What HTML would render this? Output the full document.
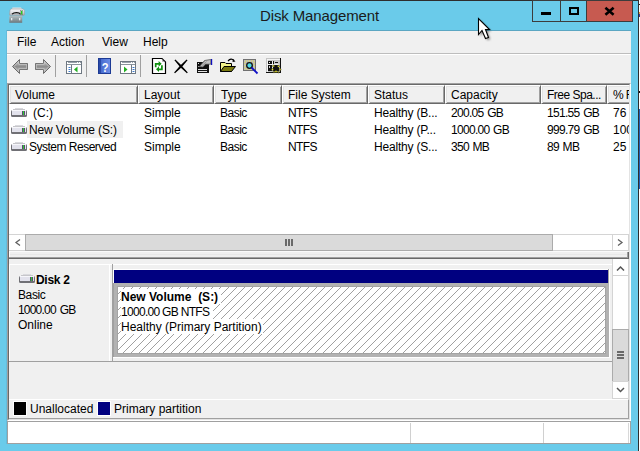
<!DOCTYPE html>
<html><head><meta charset="utf-8">
<style>
*{margin:0;padding:0;box-sizing:border-box}
html,body{width:640px;height:451px;overflow:hidden;background:#fff}
body{position:relative;font-family:"Liberation Sans",sans-serif;font-size:12px;color:#000}
.a{position:absolute}
.t{position:absolute;white-space:nowrap;line-height:14px;font-size:12px}
.num{letter-spacing:-0.7px;word-spacing:1px}
.hd{top:0;height:19px;border-style:solid;border-width:1px;border-color:#FFFFFF #696969 #696969 #FFFFFF;box-shadow:inset 1px 1px 0 #E3E3E3,inset -1px -1px 0 #A0A0A0}
</style></head><body>
<svg width="0" height="0" style="position:absolute"><defs>
<linearGradient id="dg" x1="0" y1="0" x2="0" y2="1"><stop offset="0" stop-color="#f4f4f8"/><stop offset="0.5" stop-color="#d8d8e6"/><stop offset="1" stop-color="#9a9aa0"/></linearGradient>
<symbol id="drive" viewBox="0 0 16 10">
 <rect x="4" y="1" width="8" height="1" fill="#dadade"/>
 <rect x="2" y="2" width="12" height="1" fill="#c6c6ca"/>
 <rect x="0" y="3" width="16" height="7" rx="1.5" fill="#707075"/>
 <rect x="1" y="3" width="14" height="5" fill="#e2e2ec"/>
 <rect x="1" y="3" width="14" height="1" fill="#f6f6fa"/>
 <rect x="11" y="4" width="3" height="4" fill="#5a4a70"/>
 <rect x="12" y="4" width="1" height="4" fill="#30d030"/>
</symbol>
</defs></svg>
<!-- window frame -->
<div class="a" style="left:0;top:0;width:639px;height:451px;background:#6ACBEA"></div>
<div class="a" style="left:0;top:0;width:639px;height:1px;background:#2E2E2E"></div>
<div class="a" style="left:638px;top:0;width:1px;height:451px;background:#2E2E2E"></div>
<!-- outside column -->
<div class="a" style="left:639px;top:109px;width:1px;height:80px;background:#1F5FB8"></div>
<div class="a" style="left:639px;top:91px;width:1px;height:2px;background:#111"></div>
<div class="a" style="left:639px;top:4px;width:1px;height:1px;background:#222"></div>
<div class="a" style="left:639px;top:12px;width:1px;height:2px;background:#E8A040"></div>
<div class="a" style="left:639px;top:14px;width:1px;height:3px;background:#3040A0"></div>

<!-- title icon -->
<svg class="a" style="left:9px;top:7px" width="16" height="16" viewBox="0 0 16 16">
 <defs><linearGradient id="tg1" x1="0" y1="0" x2="0" y2="1"><stop offset="0" stop-color="#f8f8fa"/><stop offset="0.6" stop-color="#dcdce0"/><stop offset="1" stop-color="#a8a8ac"/></linearGradient>
 <linearGradient id="tg2" x1="0" y1="0" x2="0" y2="1"><stop offset="0" stop-color="#b4c0c4"/><stop offset="1" stop-color="#6c787c"/></linearGradient></defs>
 <path d="M3.5 0.5 H12 L13 2 H3 Z" fill="#e4e4e6"/>
 <path d="M1 3.5 Q1 2 2.5 2 H13.5 Q15.5 2 15.5 3.5 V7.5 Q15.5 8.3 14.5 8.3 H1.5 Q0.5 8.3 0.5 7.5 Z" fill="url(#tg1)" stroke="#9a9a9e" stroke-width="0.6"/>
 <path d="M3 7.2 Q4.5 5.6 7.5 5.6 Q10.5 5.6 11.5 7.2" fill="none" stroke="#111" stroke-width="1.2"/>
 <rect x="12" y="4" width="1.4" height="3.5" fill="#20d020"/>
 <rect x="11.5" y="3.6" width="2.4" height="4.3" fill="none" stroke="#607060" stroke-width="0.4"/>
 <rect x="0.3" y="8.8" width="12.9" height="7" fill="url(#tg2)"/>
 <rect x="2" y="11" width="1.3" height="2.3" fill="#e8eef0"/>
 <rect x="10" y="11" width="1.3" height="2.3" fill="#e8eef0"/>
</svg>
<div class="t" style="left:260px;top:7px;font-size:15px;line-height:18px;color:#1b1b1b;letter-spacing:-0.12px">Disk Management</div>

<!-- caption buttons -->
<div class="a" style="left:532px;top:0;width:101px;height:22px;background:#3C3C3C"></div>
<div class="a" style="left:533px;top:1px;width:27px;height:20px;background:#6ACBEA"></div>
<div class="a" style="left:561px;top:1px;width:25px;height:20px;background:#6ACBEA"></div>
<div class="a" style="left:587px;top:1px;width:45px;height:20px;background:#C75A50"></div>
<div class="a" style="left:541px;top:12px;width:10px;height:3px;background:#000"></div>
<div class="a" style="left:569px;top:7px;width:10px;height:8px;border:2px solid #000;border-width:2px 2px 2px 2px"></div>
<svg class="a" style="left:603px;top:6px" width="13" height="11" viewBox="0 0 13 11"><path d="M2.4 1.7 L10.6 8.7 M10.6 1.7 L2.4 8.7" stroke="#000" stroke-width="2.6"/></svg>

<!-- client area -->
<div class="a" style="left:6px;top:30px;width:625px;height:1px;background:#5BA6C2"></div>
<div class="a" style="left:6px;top:30px;width:1px;height:414px;background:#62BCDC"></div>
<div class="a" style="left:7px;top:31px;width:624px;height:413px;background:#F0F0F0"></div>
<!-- menu -->
<div class="t" style="left:17px;top:35px">File</div>
<div class="t" style="left:51px;top:35px">Action</div>
<div class="t" style="left:102px;top:35px">View</div>
<div class="t" style="left:143px;top:35px">Help</div>
<div class="a" style="left:7px;top:53px;width:624px;height:1px;background:#BDBDBD"></div>
<div class="a" style="left:7px;top:54px;width:624px;height:1px;background:#FFFFFF"></div>


<!-- toolbar -->
<svg class="a" style="left:0;top:54px" width="300" height="28" viewBox="0 54 300 28">
 <defs>
  <linearGradient id="ag" x1="0" y1="0" x2="0" y2="1"><stop offset="0" stop-color="#d4d4d4"/><stop offset="0.5" stop-color="#8e8e8e"/><stop offset="1" stop-color="#c0c0c0"/></linearGradient>
  <linearGradient id="hg" x1="0" y1="0" x2="1" y2="0"><stop offset="0" stop-color="#3e62c8"/><stop offset="1" stop-color="#6d8fe8"/></linearGradient>
 </defs>
 <!-- back -->
 <path d="M12.5 66.5 L19.5 59.5 V63.5 H27.5 V69.5 H19.5 V73.5 Z" fill="url(#ag)" stroke="#6a6a6a" stroke-linejoin="round"/>
 <path d="M14 66.5 L18.7 61.7 V64.3 H26.7 V68.7 H18.7 V71.3 Z" fill="none" stroke="#d0d0d0" stroke-width="0.7"/>
 <!-- forward -->
 <path d="M50.5 66.5 L43.5 59.5 V63.5 H35.5 V69.5 H43.5 V73.5 Z" fill="url(#ag)" stroke="#6a6a6a" stroke-linejoin="round"/>
 <path d="M49 66.5 L44.3 61.7 V64.3 H36.3 V68.7 H44.3 V71.3 Z" fill="none" stroke="#d0d0d0" stroke-width="0.7"/>
 <rect x="55" y="55" width="1" height="22" fill="#A0A0A0"/>
 <!-- show tree -->
 <rect x="66.5" y="61.5" width="15" height="12" fill="#fff" stroke="#6e7882"/>
 <rect x="68" y="62" width="9" height="1" fill="#9aa3ac"/>
 <rect x="78" y="62" width="1" height="1" fill="#9aa3ac"/><rect x="80" y="62" width="1" height="1" fill="#9aa3ac"/>
 <rect x="67" y="64" width="14" height="1" fill="#8a939c"/>
 <rect x="71" y="65" width="1" height="8" fill="#6e7882"/>
 <rect x="68.5" y="67" width="2" height="1" fill="#3c78c8"/><rect x="68.5" y="69" width="2" height="1" fill="#3c78c8"/><rect x="68.5" y="71" width="2" height="1" fill="#3c78c8"/>
 <path d="M74 69.5 L77.5 66.5 V72.5 Z" fill="#22b022"/>
 <rect x="86" y="55" width="1" height="22" fill="#A0A0A0"/>
 <!-- help -->
 <rect x="98.5" y="58.5" width="12" height="15" fill="url(#hg)" stroke="#1c3a94"/>
 <rect x="99" y="59" width="2" height="14" fill="#2a4aa8"/>
 <text transform="translate(105,71.5) scale(0.85,1)" font-family="Liberation Sans" font-weight="bold" font-size="13" fill="#fff" text-anchor="middle">?</text>
 <!-- action pane -->
 <rect x="120.5" y="61.5" width="15" height="12" fill="#fff" stroke="#6e7882"/>
 <rect x="122" y="62" width="9" height="1" fill="#9aa3ac"/>
 <rect x="132" y="62" width="1" height="1" fill="#9aa3ac"/><rect x="134" y="62" width="1" height="1" fill="#9aa3ac"/>
 <rect x="121" y="64" width="14" height="1" fill="#8a939c"/>
 <rect x="131" y="65" width="1" height="8" fill="#6e7882"/>
 <rect x="132.5" y="67" width="2" height="1" fill="#3c78c8"/><rect x="132.5" y="69" width="2" height="1" fill="#3c78c8"/><rect x="132.5" y="71" width="2" height="1" fill="#3c78c8"/>
 <path d="M127.5 69.5 L124 66.5 V72.5 Z" fill="#22b022"/>
 <rect x="140" y="55" width="1" height="22" fill="#A0A0A0"/>
 <!-- refresh -->
 <path d="M152.5 58.5 H162 L165.5 62 V73.5 H152.5 Z" fill="#fff" stroke="#000" stroke-width="1.2"/>
 <path d="M162.5 59.5 V61.5 H164.5" fill="none" stroke="#999" stroke-width="0.8"/>
 <path d="M155.7 67.2 V63.8 H159.2" stroke="#0e900e" stroke-width="1.7" fill="none"/>
 <path d="M158.6 60.9 L161.6 63.8 L158.6 66.7 Z" fill="#0e900e"/>
 <path d="M161.9 65.3 V69.3 H158.4" stroke="#0e900e" stroke-width="1.7" fill="none"/>
 <path d="M159 66.6 L156 69.3 L159 72 Z" fill="#0e900e"/>
 <!-- delete -->
 <path d="M175 60 Q181 65.5 187.3 72.8 Q180.5 67.8 175 60 Z" fill="#000" stroke="#000" stroke-width="1.3"/>
 <path d="M187 60 Q180.5 65.8 174.6 72.8 Q181.5 67.8 187 60 Z" fill="#000" stroke="#000" stroke-width="1.3"/>
 <!-- properties -->
 <rect x="197" y="62" width="12" height="11" fill="#111"/>
 <rect x="198" y="63" width="1" height="1" fill="#ddd"/>
 <rect x="198" y="66" width="5" height="1" fill="#9a9a9a"/>
 <rect x="198" y="69" width="9" height="1" fill="#e0e0e0"/>
 <rect x="198" y="71" width="9" height="1" fill="#e0e0e0"/>
 <path d="M199.5 66.5 L204.5 60.5 L210.8 59.5 V64.2 L205.5 64.2 L203 67 Z" fill="#c4c4c4" stroke="#444" stroke-width="0.7"/>
 <path d="M201 65.5 L205 61 M202.5 66 L206.5 61.5" stroke="#777" stroke-width="0.6"/>
 <rect x="211" y="59" width="1.2" height="6" fill="#1010c0"/>
 <!-- open folder -->
 <path d="M220.5 62.5 H225 L226 63.5 H231.5 V71.5 H220.5 Z" fill="#f4f48a" stroke="#000"/>
 <path d="M220.5 71.5 L224 66.5 H235.5 L231.5 71.5 Z" fill="#7a7a10" stroke="#000"/>
 <path d="M228 61 Q231 57.5 234 60.5" fill="none" stroke="#000" stroke-width="1.2"/>
 <path d="M233 59 L235.5 61.5 L232.5 62 Z" fill="#000"/>
 <!-- search -->
 <rect x="243.5" y="59.5" width="12" height="11" fill="#bdbdbd" stroke="#707070"/>
 <rect x="245" y="61" width="9" height="8" fill="none" stroke="#e8e040" stroke-width="1" stroke-dasharray="1 1"/>
 <circle cx="249.5" cy="65.5" r="2.8" fill="#50d8e8" stroke="#111" stroke-width="1.3"/>
 <path d="M251.5 67.5 L257.5 73.5" stroke="#1010c8" stroke-width="1.8"/>
 <!-- wizard -->
 <rect x="266" y="58" width="15" height="15" fill="#c4c4c4"/>
 <rect x="266" y="72" width="15" height="1" fill="#111"/><rect x="280" y="58" width="1" height="15" fill="#111"/>
 <rect x="267" y="59" width="13" height="1" fill="#f4f4f4"/><rect x="267" y="59" width="1" height="13" fill="#f4f4f4"/>
 <rect x="268" y="61" width="11" height="10" fill="#111"/>
 <rect x="274" y="61" width="5" height="3" fill="#c8c8c8"/>
 <rect x="275" y="62" width="3" height="1" fill="#111"/>
 <rect x="268" y="64" width="11" height="1" fill="#f0f0f0"/>
 <rect x="272" y="61" width="1" height="10" fill="#f0f0f0"/>
 <rect x="269" y="62" width="1" height="1" fill="#eee"/>
 <rect x="269" y="66" width="1" height="2" fill="#ccc"/>
 <g fill="#f4f020" stroke="#222" stroke-width="0.5">
  <circle cx="273.5" cy="66" r="1"/><circle cx="278.5" cy="66.3" r="1"/><circle cx="272.5" cy="69.5" r="1"/>
  <circle cx="280" cy="69.5" r="1"/><circle cx="276" cy="71.5" r="1.1"/><circle cx="274" cy="72" r="0.8"/><circle cx="278.5" cy="72" r="0.8"/>
 </g>
</svg>

<!-- listview -->
<div class="a" style="left:7px;top:83px;width:624px;height:338px;background:#F0F0F0;border-style:solid;border-width:1px;border-color:#A0A0A0 #FFFFFF #FFFFFF #A0A0A0"></div>
<div class="a" style="left:8px;top:84px;width:622px;height:336px;border-style:solid;border-width:1px;border-color:#696969 #E3E3E3 #E3E3E3 #696969"></div>
<div class="a" style="left:9px;top:104px;width:620px;height:130px;background:#fff"></div>
<!-- header -->
<div class="a" style="left:9px;top:85px;width:620px;height:19px;background:#F0F0F0;overflow:hidden">
 <div class="a hd" style="left:0px;width:129px"></div>
 <div class="a hd" style="left:129px;width:76px"></div>
 <div class="a hd" style="left:205px;width:68px"></div>
 <div class="a hd" style="left:273px;width:86px"></div>
 <div class="a hd" style="left:359px;width:77px"></div>
 <div class="a hd" style="left:436px;width:96px"></div>
 <div class="a hd" style="left:532px;width:66px"></div>
 <div class="a hd" style="left:598px;width:94px"></div>
 <div class="t" style="left:6px;top:3px">Volume</div>
 <div class="t" style="left:135px;top:3px">Layout</div>
 <div class="t" style="left:212px;top:3px">Type</div>
 <div class="t" style="left:279px;top:3px">File System</div>
 <div class="t" style="left:365px;top:3px">Status</div>
 <div class="t" style="left:442px;top:3px">Capacity</div>
 <div class="t" style="left:538px;top:3px;letter-spacing:-0.5px">Free Spa...</div>
 <div class="t" style="left:604px;top:3px;letter-spacing:-0.6px">% Free</div>
</div>
<!-- rows -->
<div class="a" style="left:27px;top:121px;width:96px;height:17px;background:#F0F0F0"></div>
<div class="a" style="left:9px;top:103px;width:620px;height:131px;overflow:hidden">
 <svg class="a drv" style="left:2px;top:4px" width="16" height="10"><use href="#drive"/></svg>
 <div class="t" style="left:24px;top:3px">(C:)</div>
 <div class="t" style="left:135px;top:3px">Simple</div>
 <div class="t" style="left:211px;top:3px;letter-spacing:-0.5px">Basic</div>
 <div class="t" style="left:279px;top:3px;letter-spacing:-0.6px">NTFS</div>
 <div class="t" style="left:365px;top:3px;letter-spacing:-0.2px">Healthy (B...</div>
 <div class="t num" style="left:442px;top:3px">200.05 GB</div>
 <div class="t num" style="left:538px;top:3px">151.55 GB</div>
 <div class="t" style="left:604px;top:3px">76 %</div>
<svg class="a drv" style="left:2px;top:21px" width="16" height="10"><use href="#drive"/></svg>
 <div class="t" style="left:20px;top:20px;letter-spacing:-0.15px">New Volume (S:)</div>
 <div class="t" style="left:135px;top:20px">Simple</div>
 <div class="t" style="left:211px;top:20px;letter-spacing:-0.5px">Basic</div>
 <div class="t" style="left:279px;top:20px;letter-spacing:-0.6px">NTFS</div>
 <div class="t" style="left:365px;top:20px;letter-spacing:-0.2px">Healthy (P...</div>
 <div class="t num" style="left:442px;top:20px">1000.00 GB</div>
 <div class="t num" style="left:538px;top:20px">999.79 GB</div>
 <div class="t" style="left:604px;top:20px">100 %</div>
<svg class="a drv" style="left:2px;top:38px" width="16" height="10"><use href="#drive"/></svg>
 <div class="t" style="left:20px;top:37px;letter-spacing:-0.5px">System Reserved</div>
 <div class="t" style="left:135px;top:37px">Simple</div>
 <div class="t" style="left:211px;top:37px;letter-spacing:-0.5px">Basic</div>
 <div class="t" style="left:279px;top:37px;letter-spacing:-0.6px">NTFS</div>
 <div class="t" style="left:365px;top:37px;letter-spacing:-0.2px">Healthy (S...</div>
 <div class="t num" style="left:442px;top:37px">350 MB</div>
 <div class="t num" style="left:538px;top:37px">89 MB</div>
 <div class="t" style="left:604px;top:37px">25 %</div>

</div>


<!-- h scrollbar -->
<div class="a" style="left:9px;top:234px;width:620px;height:17px;background:#fff;border-top:1px solid #D4D4D4;border-bottom:1px solid #D4D4D4;border-right:1px solid #D4D4D4"></div>
<div class="a" style="left:25px;top:234px;width:528px;height:17px;background:#DADADA;border:1px solid #ABABAB"></div>
<div class="a" style="left:612px;top:234px;width:1px;height:17px;background:#D4D4D4"></div>
<svg class="a" style="left:9px;top:234px" width="620" height="17">
 <path d="M11 5.5 L7 8.5 L11 11.5" fill="none" stroke="#606060" stroke-width="1.3"/>
 <path d="M609 5.5 L613 8.5 L609 11.5" fill="none" stroke="#606060" stroke-width="1.3"/>
 <rect x="276" y="5" width="2" height="7" fill="#6a6a6a"/><rect x="279" y="5" width="2" height="7" fill="#6a6a6a"/><rect x="282" y="5" width="2" height="7" fill="#6a6a6a"/>
</svg>

<!-- graphical view -->
<!-- splitter -->
<div class="a" style="left:9px;top:251px;width:620px;height:8px;background:#F0F0F0"></div>
<div class="a" style="left:9px;top:251px;width:619px;height:1px;background:#FAFAFA"></div>
<div class="a" style="left:9px;top:254px;width:618px;height:1px;background:#E8E8E8"></div>
<div class="a" style="left:9px;top:251px;width:1px;height:6px;background:#FFFFFF"></div>
<div class="a" style="left:9px;top:257px;width:619px;height:1px;background:#A0A0A0"></div>
<div class="a" style="left:9px;top:258px;width:620px;height:1px;background:#696969"></div>
<div class="a" style="left:627px;top:252px;width:1px;height:6px;background:#A0A0A0"></div>
<div class="a" style="left:628px;top:252px;width:1px;height:7px;background:#696969"></div>
<!-- disk label -->
<div class="a" style="left:9px;top:264px;width:603px;height:1px;background:#fff"></div>
<div class="a" style="left:9px;top:361px;width:603px;height:1px;background:#A0A0A0"></div>
<div class="a" style="left:9px;top:264px;width:1px;height:97px;background:#fff"></div>
<div class="a" style="left:109px;top:265px;width:1px;height:96px;background:#fff"></div>
<div class="a" style="left:112px;top:264px;width:1px;height:97px;background:#A0A0A0"></div>
<svg class="a" style="left:19px;top:273px" width="16" height="10"><use href="#drive"/></svg>
<div class="t" style="left:36px;top:273px;font-weight:bold;line-height:15px;letter-spacing:-0.3px">Disk 2</div>
<div class="t" style="left:18px;top:288px;line-height:15px;letter-spacing:-0.4px">Basic</div>
<div class="t num" style="left:18px;top:303px;line-height:15px;letter-spacing:-0.8px;word-spacing:1.5px">1000.00 GB</div>
<div class="t" style="left:18px;top:318px;line-height:15px">Online</div>
<!-- partition -->
<div class="a" style="left:113px;top:269px;width:495px;height:1px;background:#fff"></div>
<div class="a" style="left:113px;top:269px;width:1px;height:14px;background:#fff"></div>
<div class="a" style="left:114px;top:270px;width:494px;height:13px;background:#000080"></div>
<div class="a" style="left:608px;top:269px;width:1px;height:14px;background:#A0A0A0"></div>
<div class="a" style="left:609px;top:269px;width:1px;height:89px;background:#fff"></div>
<div class="a" style="left:113px;top:357px;width:497px;height:1px;background:#fff"></div>
<div class="a" style="left:113px;top:283px;width:496px;height:74px;background:#B2B2B2;border-left:1px solid #A0A0A0"></div>
<div class="a" style="left:117px;top:286px;width:489px;height:68px;background:#A4A4A4"></div>
<svg class="a" style="left:118px;top:287px" width="487" height="66">
 <defs><pattern id="hatch" patternUnits="userSpaceOnUse" width="8" height="8"><rect x="6" y="0" width="1" height="1" fill="#A0A0A0"/><rect x="5" y="1" width="1" height="1" fill="#A0A0A0"/><rect x="4" y="2" width="1" height="1" fill="#A0A0A0"/><rect x="3" y="3" width="1" height="1" fill="#A0A0A0"/><rect x="2" y="4" width="1" height="1" fill="#A0A0A0"/><rect x="1" y="5" width="1" height="1" fill="#A0A0A0"/><rect x="0" y="6" width="1" height="1" fill="#A0A0A0"/><rect x="7" y="7" width="1" height="1" fill="#A0A0A0"/></pattern></defs>
 <rect width="487" height="66" fill="#fff"/>
 <rect width="487" height="66" fill="url(#hatch)"/>
</svg>
<div class="a" style="left:121px;top:289px;width:100px;height:15px;background:#fff"></div>
<div class="a" style="left:121px;top:304px;width:92px;height:15px;background:#fff"></div>
<div class="a" style="left:121px;top:319px;width:142px;height:15px;background:#fff"></div>
<div class="t" style="left:121px;top:290px;font-weight:bold;line-height:15px">New Volume&nbsp; (S:)</div>
<div class="t num" style="left:121px;top:305px;line-height:15px;word-spacing:0">1000.00 GB NTFS</div>
<div class="t" style="left:121px;top:320px;line-height:15px">Healthy (Primary Partition)</div>
<!-- v scrollbar -->
<div class="a" style="left:612px;top:259px;width:17px;height:140px;background:#fff;border-left:1px solid #D4D4D4;border-right:1px solid #D4D4D4;border-bottom:1px solid #D4D4D4"></div>
<div class="a" style="left:612px;top:275px;width:17px;height:1px;background:#D4D4D4"></div>
<div class="a" style="left:612px;top:329px;width:17px;height:53px;background:#DADADA;border:1px solid #ABABAB"></div>
<div class="a" style="left:612px;top:381px;width:17px;height:1px;background:#D4D4D4"></div>
<svg class="a" style="left:612px;top:259px" width="17" height="140">
 <path d="M5 11.5 L8.5 8 L12 11.5" fill="none" stroke="#555" stroke-width="1.5"/>
 <path d="M5 129 L8.5 132.5 L12 129" fill="none" stroke="#555" stroke-width="1.5"/>
 <rect x="5" y="92" width="7" height="2" fill="#6a6a6a"/><rect x="5" y="95" width="7" height="2" fill="#6a6a6a"/><rect x="5" y="98" width="7" height="2" fill="#6a6a6a"/>
</svg>
<!-- legend -->
<div class="a" style="left:9px;top:399px;width:620px;height:20px;border-top:1px solid #fff;border-bottom:1px solid #A0A0A0;border-right:1px solid #A0A0A0"></div>
<div class="a" style="left:13px;top:401px;width:14px;height:15px;background:#fff"></div>
<div class="a" style="left:14px;top:402px;width:12px;height:13px;background:#000"></div>
<div class="t" style="left:30px;top:402px">Unallocated</div>
<div class="a" style="left:97px;top:401px;width:14px;height:15px;background:#fff"></div>
<div class="a" style="left:98px;top:402px;width:12px;height:13px;background:#000080"></div>
<div class="t" style="left:114px;top:402px">Primary partition</div>

<!-- status bar -->
<div class="a" style="left:7px;top:421px;width:624px;height:23px;background:#fff;border:1px solid #A0A0A0"></div>
<div class="a" style="left:410px;top:423px;width:1px;height:20px;background:#D0D0D0"></div>
<div class="a" style="left:543px;top:423px;width:1px;height:20px;background:#D0D0D0"></div>
<div class="a" style="left:628px;top:423px;width:1px;height:20px;background:#D8D8D8"></div>


<!-- cursor -->
<svg class="a" style="left:474px;top:14px" width="26" height="32" viewBox="0 0 26 32">
 <defs><filter id="cs" x="-50%" y="-50%" width="200%" height="200%"><feGaussianBlur stdDeviation="1"/></filter></defs>
 <path d="M4.5 4.5 L4.5 20.5 L8 16.5 L11.5 24.5 L14.5 23.5 L11.5 15.5 L15.5 15.5 Z" fill="rgba(0,0,0,0.45)" filter="url(#cs)" transform="translate(1.8,1.8)"/>
 <path d="M4.5 4.5 L4.5 20.5 L8 16.5 L11.5 24.5 L14.5 23.5 L11.5 15.5 L15.5 15.5 Z" fill="#fff" stroke="#000" stroke-width="1.1" stroke-linejoin="miter"/>
</svg>
</body></html>
